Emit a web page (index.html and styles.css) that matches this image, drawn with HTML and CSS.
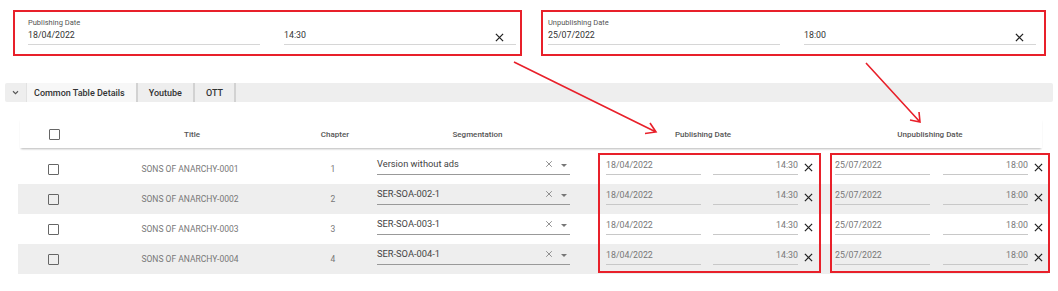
FILE: index.html
```html
<!DOCTYPE html>
<html>

<head>
    <meta charset="utf-8">
    <title>Publishing dates</title>
    <link rel="stylesheet" href="styles.css">
</head>

<body>
    <div class="page">

        <div class="filters">
            <div class="filter filter-pub">
                <div class="filter-label">Publishing Date</div>
                <div class="filter-fields">
                    <div class="filter-field">18/04/2022</div>
                    <div class="filter-field">
                        <span>14:30</span>
                        <svg class="x-icon" viewBox="0 0 10 10"><path d="M1 1L9 9M9 1L1 9" /></svg>
                    </div>
                </div>
            </div>
            <div class="filter filter-unpub">
                <div class="filter-label">Unpublishing Date</div>
                <div class="filter-fields">
                    <div class="filter-field">25/07/2022</div>
                    <div class="filter-field">
                        <span>18:00</span>
                        <svg class="x-icon" viewBox="0 0 10 10"><path d="M1 1L9 9M9 1L1 9" /></svg>
                    </div>
                </div>
            </div>
        </div>

        <div class="tabs">
            <div class="tab-toggle">
                <svg viewBox="0 0 8 6"><path d="M1 1.5L4 4.5L7 1.5" /></svg>
            </div>
            <div class="tab active">Common Table Details</div>
            <div class="tab">Youtube</div>
            <div class="tab">OTT</div>
        </div>

        <div class="table">
            <div class="thead">
                <div class="cell"><span class="checkbox"></span></div>
                <div class="cell">Title</div>
                <div class="cell">Chapter</div>
                <div class="cell th-seg">Segmentation</div>
                <div class="cell th-pub">Publishing Date</div>
                <div class="cell th-unpub">Unpublishing Date</div>
            </div>

            <div class="tbody" id="rows">
                <div class="mark mark-pub"></div>
                <div class="mark mark-unpub"></div>
            </div>
        </div>

        <svg class="arrows" viewBox="0 0 1058 291">
            <path d="M514 62L656 132M650 123L656 132L645 133.5" />
            <path d="M866 63L920 122M919 112L920 122L910 120" />
        </svg>
    </div>

    <script type="text/javascript">
        var rows = [
            { title: "SONS OF ANARCHY-0001", chapter: 1, seg: "Version without ads" },
            { title: "SONS OF ANARCHY-0002", chapter: 2, seg: "SER-SOA-002-1" },
            { title: "SONS OF ANARCHY-0003", chapter: 3, seg: "SER-SOA-003-1" },
            { title: "SONS OF ANARCHY-0004", chapter: 4, seg: "SER-SOA-004-1" }
        ];

        var cross = '<svg class="x-icon" viewBox="0 0 10 10"><path d="M1 1L9 9M9 1L1 9" /></svg>';

        function dateCell(cls, date, time) {
            return '<div class="cell ' + cls + '">' +
                '<div class="input date">' + date + '</div>' +
                '<div class="input time">' + time + '</div>' + cross + '</div>';
        }

        var body = document.getElementById("rows");
        var html = "";
        rows.forEach(function (r) {
            html += '<div class="row">' +
                '<div class="cell"><span class="checkbox"></span></div>' +
                '<div class="cell title">' + r.title + '</div>' +
                '<div class="cell chapter">' + r.chapter + '</div>' +
                '<div class="cell seg"><div class="select">' +
                '<span class="select-value">' + r.seg + '</span>' +
                '<svg class="clear-icon" viewBox="0 0 10 10"><path d="M1.5 1.5L8.5 8.5M8.5 1.5L1.5 8.5" /></svg>' +
                '<span class="caret"></span></div></div>' +
                dateCell("pub", "18/04/2022", "14:30") +
                dateCell("unpub", "25/07/2022", "18:00") +
                '</div>';
        });
        body.insertAdjacentHTML("afterbegin", html);
    </script>
</body>

</html>
```

FILE: styles.css
```css
body {
    margin: 0;
    font-family: "Roboto", "Liberation Sans", sans-serif;
    background-color: #fff;
    color: #333;
}

.page {
    position: relative;
    width: 1058px;
    height: 291px;
    overflow: hidden;
}

/* top filter boxes */

.filters {
    display: flex;
    gap: 19px;
    padding: 10px 0 0 13px;
}

.filter {
    border: 2px solid #e8202a;
    padding: 6px 4px 9px 13px;
    height: 27px;
}

.filter-pub {
    width: 488px;
}

.filter-unpub {
    width: 488px;
    padding-left: 5px;
    padding-right: 8px;
}

.filter-label {
    font-size: 7.5px;
    line-height: 9px;
    color: #555;
}

.filter-fields {
    display: flex;
    gap: 24px;
}

.filter-field {
    flex: 1;
    display: flex;
    align-items: flex-start;
    justify-content: space-between;
    font-size: 8.8px;
    line-height: 13px;
    padding: 2px 0 2px 0;
    border-bottom: 1px solid #d6d6d6;
    color: #333;
}

.filter-field .x-icon {
    margin: 4px 12px 0 0;
}

.x-icon {
    width: 9px;
    height: 9px;
    stroke: #222;
    stroke-width: 1.4;
    fill: none;
}

/* tabs */

.tabs {
    display: flex;
    margin: 27px 5px 0 5px;
    height: 19px;
    background-color: #eeeeee;
    border-radius: 2px;
}

.tab-toggle {
    width: 21px;
    display: flex;
    align-items: center;
    justify-content: center;
    border-right: 1px solid #e2e2e2;
}

.tab-toggle svg {
    width: 7px;
    height: 5px;
    stroke: #555;
    stroke-width: 1.3;
    fill: none;
}

.tab {
    display: flex;
    align-items: center;
    padding: 0 11px 0 11px;
    font-size: 9px;
    font-weight: 500;
    color: #333;
    border-right: 2px solid #d2d2d2;
}

.tab.active {
    background-color: #f7f7f7;
    padding-left: 7px;
}

/* table */

.table {
    margin: 16px 0 0 18px;
    width: 1030px;
}

.thead,
.row {
    display: grid;
    grid-template-columns: 70px 204px 82px 224px 232px 218px;
    align-items: center;
}

.thead {
    height: 27px;
    padding-top: 3px;
    width: 1022px;
    margin-left: 2px;
    box-shadow: 0 2px 2px -1px rgba(0, 0, 0, .28);
    font-size: 8px;
    font-weight: 500;
    color: #555;
    text-align: center;
}

.thead .cell:first-child {
    margin-left: -2px;
}

.th-seg {
    padding: 0 24px 0 3px;
}

.th-pub {
    padding-right: 26px;
}

.th-unpub {
    padding-right: 22px;
}

.tbody {
    position: relative;
    margin-top: 6px;
}

.row {
    height: 30px;
}

.row:nth-child(even) {
    background-color: #eeeeee;
}

.cell {
    display: flex;
    justify-content: center;
    align-items: center;
}

.thead .cell {
    display: block;
}

.thead .cell:first-child {
    display: flex;
}

.checkbox {
    display: block;
    width: 9px;
    height: 9px;
    border: 1.5px solid #666;
    border-radius: 1px;
}

.title,
.chapter {
    font-size: 8.5px;
    color: #777;
}

.seg {
    justify-content: flex-start;
    align-self: start;
    padding: 3px 0 0 3px;
}

.select {
    width: 193px;
    height: 18px;
    display: flex;
    align-items: flex-start;
    border-bottom: 1px solid #999;
    box-sizing: border-box;
    padding-top: 1px;
}

.select-value {
    flex: 1;
    font-size: 9.3px;
    line-height: 12px;
    color: #444;
}

.clear-icon {
    width: 8px;
    height: 8px;
    margin: 2px 6px 0 0;
    stroke: #777;
    stroke-width: 1;
    fill: none;
}

.caret {
    width: 0;
    height: 0;
    margin: 6px 3px 0 2px;
    border-left: 3px solid transparent;
    border-right: 3px solid transparent;
    border-top: 3px solid #777;
}

.pub,
.unpub {
    justify-content: flex-start;
    align-self: start;
    padding-top: 5px;
}

.pub {
    padding-left: 8px;
}

.unpub {
    padding-left: 5px;
}

.input {
    font-size: 8.8px;
    line-height: 12px;
    height: 15px;
    color: #777;
    border-bottom: 1px solid #c8c8c8;
}

.pub .date {
    width: 95px;
    margin-right: 12px;
}

.unpub .date {
    width: 95px;
    margin-right: 13px;
}

.time {
    width: 85px;
    text-align: right;
}

.pub .x-icon,
.unpub .x-icon {
    margin: 1px 0 0 6px;
}

/* annotation overlays */

.mark {
    position: absolute;
    top: -1px;
    height: 116px;
    border: 2px solid #e8202a;
}

.mark-pub {
    left: 580px;
    width: 219px;
}

.mark-unpub {
    left: 812px;
    width: 216px;
}

.arrows {
    position: absolute;
    left: 0;
    top: 0;
    width: 1058px;
    height: 291px;
    pointer-events: none;
    stroke: #e8202a;
    stroke-width: 1.6;
    fill: none;
}
```
